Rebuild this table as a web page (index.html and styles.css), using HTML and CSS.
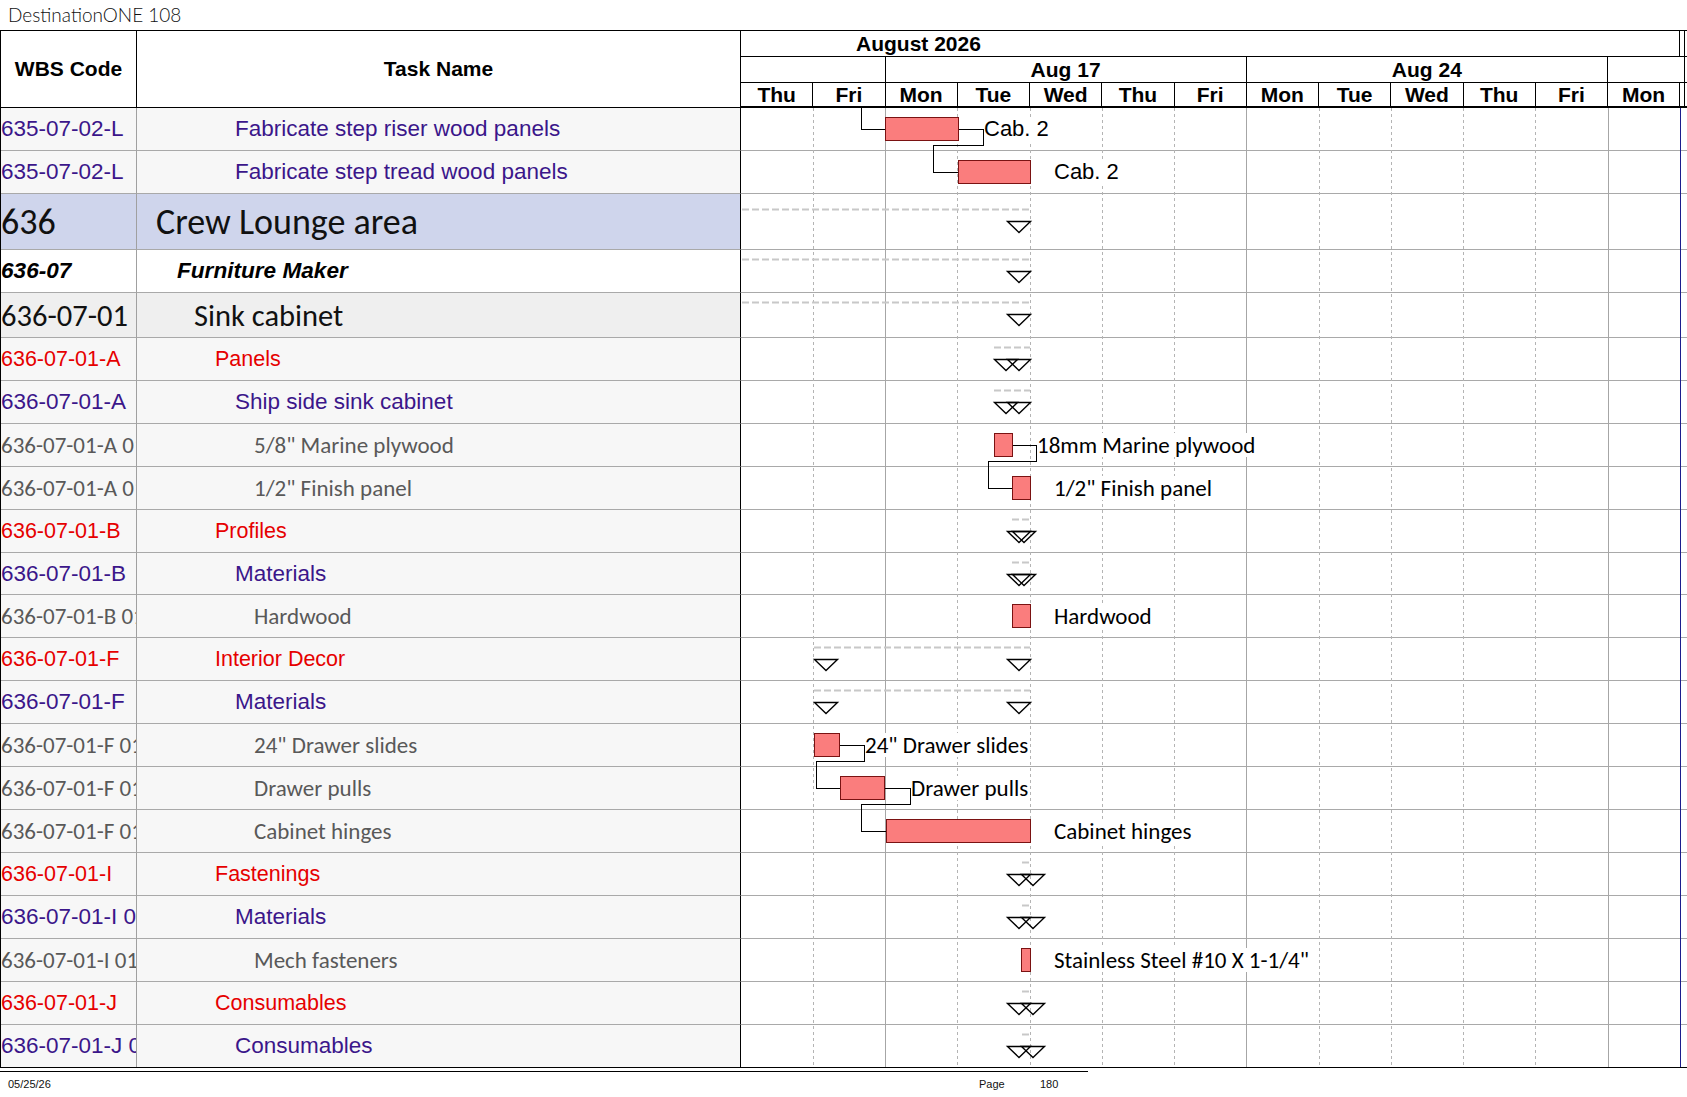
FILE: index.html
```html
<!DOCTYPE html>
<html lang="en">
<head>
<meta charset="utf-8">
<title>DestinationONE 108</title>
<link rel="stylesheet" href="styles.css">
</head>
<body>
<div class="title">DestinationONE 108</div>
<div class="sheet">
  <div class="head">
    <div class="h-wbs">WBS Code</div>
    <div class="h-task">Task Name</div>
    <div class="h-gantt">
      <div class="g-month"><div class="m-cell">August 2026</div><div class="m-end"></div></div>
      <div class="g-week"><div class="w-cell"></div><div class="w-cell">Aug 17</div><div class="w-cell">Aug 24</div><div class="w-cell"></div></div>
      <div class="g-day">
        <div class="d-cell">Thu</div><div class="d-cell">Fri</div><div class="d-cell">Mon</div><div class="d-cell">Tue</div><div class="d-cell">Wed</div><div class="d-cell">Thu</div><div class="d-cell">Fri</div><div class="d-cell">Mon</div><div class="d-cell">Tue</div><div class="d-cell">Wed</div><div class="d-cell">Thu</div><div class="d-cell">Fri</div><div class="d-cell">Mon</div><div class="d-end"></div>
      </div>
    </div>
  </div>
  <div class="body">
    <div class="row t-purple"><div class="c-wbs">635-07-02-L</div><div class="c-task">Fabricate step riser wood panels</div><div class="c-gantt"></div></div>
    <div class="row t-purple"><div class="c-wbs">635-07-02-L</div><div class="c-task">Fabricate step tread wood panels</div><div class="c-gantt"></div></div>
    <div class="row t-l1"><div class="c-wbs">636</div><div class="c-task">Crew Lounge area</div><div class="c-gantt"></div></div>
    <div class="row t-l2"><div class="c-wbs">636-07</div><div class="c-task">Furniture Maker</div><div class="c-gantt"></div></div>
    <div class="row t-l3"><div class="c-wbs">636-07-01</div><div class="c-task">Sink cabinet</div><div class="c-gantt"></div></div>
    <div class="row t-red"><div class="c-wbs">636-07-01-A</div><div class="c-task">Panels</div><div class="c-gantt"></div></div>
    <div class="row t-purple"><div class="c-wbs">636-07-01-A</div><div class="c-task">Ship side sink cabinet</div><div class="c-gantt"></div></div>
    <div class="row t-gray"><div class="c-wbs">636-07-01-A 01 01</div><div class="c-task">5/8&quot; Marine plywood</div><div class="c-gantt"></div></div>
    <div class="row t-gray"><div class="c-wbs">636-07-01-A 01 02</div><div class="c-task">1/2&quot; Finish panel</div><div class="c-gantt"></div></div>
    <div class="row t-red"><div class="c-wbs">636-07-01-B</div><div class="c-task">Profiles</div><div class="c-gantt"></div></div>
    <div class="row t-purple short"><div class="c-wbs">636-07-01-B</div><div class="c-task">Materials</div><div class="c-gantt"></div></div>
    <div class="row t-gray"><div class="c-wbs">636-07-01-B 01 01</div><div class="c-task">Hardwood</div><div class="c-gantt"></div></div>
    <div class="row t-red"><div class="c-wbs">636-07-01-F</div><div class="c-task">Interior Decor</div><div class="c-gantt"></div></div>
    <div class="row t-purple"><div class="c-wbs">636-07-01-F</div><div class="c-task">Materials</div><div class="c-gantt"></div></div>
    <div class="row t-gray"><div class="c-wbs">636-07-01-F 01 01</div><div class="c-task">24&quot; Drawer slides</div><div class="c-gantt"></div></div>
    <div class="row t-gray"><div class="c-wbs">636-07-01-F 01 02</div><div class="c-task">Drawer pulls</div><div class="c-gantt"></div></div>
    <div class="row t-gray"><div class="c-wbs">636-07-01-F 01 03</div><div class="c-task">Cabinet hinges</div><div class="c-gantt"></div></div>
    <div class="row t-red"><div class="c-wbs">636-07-01-I</div><div class="c-task">Fastenings</div><div class="c-gantt"></div></div>
    <div class="row t-purple"><div class="c-wbs">636-07-01-I 01</div><div class="c-task">Materials</div><div class="c-gantt"></div></div>
    <div class="row t-gray"><div class="c-wbs">636-07-01-I 01 01</div><div class="c-task">Mech fasteners</div><div class="c-gantt"></div></div>
    <div class="row t-red"><div class="c-wbs">636-07-01-J</div><div class="c-task">Consumables</div><div class="c-gantt"></div></div>
    <div class="row t-purple last"><div class="c-wbs">636-07-01-J 01</div><div class="c-task">Consumables</div><div class="c-gantt"></div></div>

    <svg class="chart" width="946" height="959" viewBox="0 0 946 959" xmlns="http://www.w3.org/2000/svg">
      <g class="grid">
        <line class="gl-d" x1="71.5" y1="0" x2="71.5" y2="959"/>
        <line class="gl-s" x1="143.5" y1="0" x2="143.5" y2="959"/>
        <line class="gl-d" x1="215.5" y1="0" x2="215.5" y2="959"/>
        <line class="gl-d" x1="288.5" y1="0" x2="288.5" y2="959"/>
        <line class="gl-d" x1="360.5" y1="0" x2="360.5" y2="959"/>
        <line class="gl-d" x1="432.5" y1="0" x2="432.5" y2="959"/>
        <line class="gl-s" x1="504.5" y1="0" x2="504.5" y2="959"/>
        <line class="gl-d" x1="577.5" y1="0" x2="577.5" y2="959"/>
        <line class="gl-d" x1="649.5" y1="0" x2="649.5" y2="959"/>
        <line class="gl-d" x1="721.5" y1="0" x2="721.5" y2="959"/>
        <line class="gl-d" x1="793.5" y1="0" x2="793.5" y2="959"/>
        <line class="gl-s" x1="866.5" y1="0" x2="866.5" y2="959"/>
        <line class="gl-edge" x1="938.5" y1="0" x2="938.5" y2="959"/>
      </g>
      <g class="summ">
        <line x1="0" y1="101.5" x2="288" y2="101.5"/>
        <line x1="0" y1="151.5" x2="288" y2="151.5"/>
        <line x1="0" y1="194.5" x2="288" y2="194.5"/>
        <line x1="252" y1="239.5" x2="288" y2="239.5"/>
        <line x1="252" y1="282.5" x2="288" y2="282.5"/>
        <line x1="270" y1="411.5" x2="288" y2="411.5"/>
        <line x1="270" y1="454.5" x2="288" y2="454.5"/>
        <line x1="72" y1="539.5" x2="288" y2="539.5"/>
        <line x1="72" y1="582.5" x2="288" y2="582.5"/>
        <line x1="280" y1="754.5" x2="288" y2="754.5"/>
        <line x1="280" y1="797.5" x2="288" y2="797.5"/>
        <line x1="280" y1="883.5" x2="288" y2="883.5"/>
        <line x1="280" y1="926.5" x2="288" y2="926.5"/>
      </g>
      <g class="tri">
        <polygon points="265.5,113.5 288.5,113.5 277,124.5"/>
        <polygon points="265.5,163.5 288.5,163.5 277,174.5"/>
        <polygon points="265.5,206.5 288.5,206.5 277,217.5"/>
        <polygon points="252.5,251.5 275.5,251.5 264,262.5"/>
        <polygon points="265.5,251.5 288.5,251.5 277,262.5"/>
        <polygon points="252.5,294.5 275.5,294.5 264,305.5"/>
        <polygon points="265.5,294.5 288.5,294.5 277,305.5"/>
        <polygon points="265.5,423.5 288.5,423.5 277,434.5"/>
        <polygon points="270.5,423.5 293.5,423.5 282,434.5"/>
        <polygon points="265.5,466.5 288.5,466.5 277,477.5"/>
        <polygon points="270.5,466.5 293.5,466.5 282,477.5"/>
        <polygon points="72.5,551.5 95.5,551.5 84,562.5"/>
        <polygon points="265.5,551.5 288.5,551.5 277,562.5"/>
        <polygon points="72.5,594.5 95.5,594.5 84,605.5"/>
        <polygon points="265.5,594.5 288.5,594.5 277,605.5"/>
        <polygon points="265.5,766.5 288.5,766.5 277,777.5"/>
        <polygon points="279.5,766.5 302.5,766.5 291,777.5"/>
        <polygon points="265.5,809.5 288.5,809.5 277,820.5"/>
        <polygon points="279.5,809.5 302.5,809.5 291,820.5"/>
        <polygon points="265.5,895.5 288.5,895.5 277,906.5"/>
        <polygon points="279.5,895.5 302.5,895.5 291,906.5"/>
        <polygon points="265.5,938.5 288.5,938.5 277,949.5"/>
        <polygon points="279.5,938.5 302.5,938.5 291,949.5"/>
      </g>
      <g class="link">
        <polyline points="119.5,0 119.5,21.5 143.5,21.5"/>
        <polyline points="216,21.5 241.5,21.5 241.5,37.5 191.5,37.5 191.5,64.5 216,64.5"/>
        <polyline points="270,337.5 294.5,337.5 294.5,353.5 246.5,353.5 246.5,380.5 270,380.5"/>
        <polyline points="97,637.5 122.5,637.5 122.5,653.5 74.5,653.5 74.5,680.5 98,680.5"/>
        <polyline points="142.5,680.5 168.5,680.5 168.5,696.5 119.5,696.5 119.5,723.5 144,723.5"/>
      </g>
      <g class="bar">
        <rect x="143.5" y="9.5" width="72.5" height="23"/>
        <rect x="216.5" y="52.5" width="72" height="23"/>
        <rect x="252.5" y="325.5" width="18" height="23"/>
        <rect x="270.5" y="368.5" width="18" height="23"/>
        <rect x="270.5" y="496.5" width="18" height="23"/>
        <rect x="72.5" y="625.5" width="25" height="23"/>
        <rect x="98.5" y="668.5" width="44" height="23"/>
        <rect x="144.5" y="711.5" width="144" height="23"/>
        <rect x="279.5" y="840.5" width="9" height="23"/>
      </g>
    </svg>

    <div class="lbl lbl-a" style="left:983px;top:9px">Cab. 2</div>
    <div class="lbl lbl-a" style="left:1053px;top:52px">Cab. 2</div>
    <div class="lbl lbl-c" style="left:1036px;top:325px">18mm Marine plywood</div>
    <div class="lbl lbl-c" style="left:1053px;top:368px">1/2&quot; Finish panel</div>
    <div class="lbl lbl-c" style="left:1053px;top:496px">Hardwood</div>
    <div class="lbl lbl-c" style="left:864px;top:625px">24&quot; Drawer slides</div>
    <div class="lbl lbl-c" style="left:910px;top:668px">Drawer pulls</div>
    <div class="lbl lbl-c" style="left:1053px;top:711px">Cabinet hinges</div>
    <div class="lbl lbl-c" style="left:1053px;top:840px">Stainless Steel #10 X 1-1/4&quot;</div>
  </div>
</div>
<div class="footer">
  <span class="f-date">05/25/26</span>
  <span class="f-page">Page</span>
  <span class="f-num">180</span>
</div>
</body>
</html>
```

FILE: styles.css
```css
* { box-sizing: border-box; }

html, body {
  margin: 0;
  padding: 0;
  background: #fff;
}

body {
  width: 1687px;
  height: 1097px;
  overflow: hidden;
  font-family: "Liberation Sans", Arial, sans-serif;
  color: #000;
}

.title {
  height: 30px;
  padding-left: 8px;
  font-family: "Lato", "Open Sans", sans-serif;
  font-weight: 300;
  font-size: 19px;
  line-height: 30px;
  color: #111;
}

.sheet {
  border-top: 1px solid #000;
  border-left: 1px solid #000;
  border-bottom: 1px solid #000;
}

/* ---------- header ---------- */
.head {
  display: grid;
  grid-template-columns: 136px 604px 1fr;
  height: 77px;
}

.h-wbs,
.h-task {
  display: flex;
  align-items: center;
  justify-content: center;
  border-right: 1px solid #000;
  border-bottom: 1px solid #000;
  font-weight: bold;
  font-size: 21px;
  padding-bottom: 1px;
}

.h-gantt {
  display: grid;
  grid-template-rows: 26px 26px 25px;
  font-weight: bold;
  font-size: 21px;
}

.g-month {
  display: grid;
  grid-template-columns: 939.25px 5px 1fr;
  border-bottom: 1px solid #000;
}

.m-cell {
  border-right: 1px solid #000;
  padding-left: 115px;
  line-height: 25px;
}

.m-end {
  border-right: 1px solid #000;
}

.g-week {
  display: grid;
  grid-template-columns: 144.5px 361.25px 361.25px 77.25px 1fr;
  border-bottom: 1px solid #000;
}

.w-cell {
  border-right: 1px solid #000;
  text-align: center;
  line-height: 25px;
}

.g-day {
  display: grid;
  grid-template-columns: repeat(13, 72.25px) 5px 1fr;
  border-bottom: 2px solid #000;
}

.d-cell,
.d-end {
  border-right: 1px solid #000;
  text-align: center;
  line-height: 23px;
}

/* ---------- body ---------- */
.body {
  position: relative;
}

.row {
  display: grid;
  grid-template-columns: 136px 604px 1fr;
  height: 43px;
}

.row.short { height: 42px; }
.row.last { height: 42px; }
.row.last > div { border-bottom: none; }

.c-wbs,
.c-task {
  display: flex;
  align-items: center;
  white-space: nowrap;
  overflow: hidden;
  background: #f7f7f7;
  border-bottom: 1px solid #a9a9a9;
}

.c-wbs {
  border-right: 1px solid #a0a0a0;
}

.c-task {
  border-right: 1px solid #000;
}

.c-gantt {
  background: #fff;
  border-bottom: 1px solid #a9a9a9;
}

/* row types */
.t-purple { color: #3b168a; font-size: 22.5px; }
.t-purple .c-task { padding-left: 98px; }

.t-red { color: #e60000; font-size: 21.5px; }
.t-red .c-task { padding-left: 78px; }

.t-gray {
  color: #595959;
  font-family: "Carlito", "Lato", sans-serif;
  font-size: 23px;
}
.t-gray .c-task { padding-left: 117px; }

.t-l1 {
  height: 56px;
  color: #111;
  font-family: "Carlito", "Lato", sans-serif;
  font-size: 36px;
}
.t-l1 .c-wbs,
.t-l1 .c-task { background: #cfd5ec; }
.t-l1 .c-task { padding-left: 19px; }

.t-l2 {
  font-weight: bold;
  font-style: italic;
  font-size: 22.6px;
  color: #000;
}
.t-l2 .c-wbs,
.t-l2 .c-task { background: #fff; }
.t-l2 .c-task { padding-left: 40px; }

.t-l3 {
  height: 45px;
  color: #111;
  font-family: "Carlito", "Lato", sans-serif;
  font-size: 30.5px;
}
.t-l3 .c-wbs,
.t-l3 .c-task { background: #efefef; }
.t-l3 .c-task { padding-left: 57px; }

/* ---------- chart overlay ---------- */
.chart {
  position: absolute;
  left: 741px;
  top: 0;
  overflow: visible;
}

.gl-d {
  stroke: #b4b4b4;
  stroke-width: 1;
  stroke-dasharray: 3 3;
  shape-rendering: crispEdges;
}

.gl-s {
  stroke: #a6a6a6;
  stroke-width: 1;
  shape-rendering: crispEdges;
}

.gl-edge {
  stroke: #1c1c8c;
  stroke-width: 1;
  shape-rendering: crispEdges;
}

.summ line {
  stroke: #c8c8c8;
  stroke-width: 2;
  stroke-dasharray: 7 3;
}

.tri polygon {
  fill: none;
  stroke: #000;
  stroke-width: 1.4;
  stroke-linejoin: miter;
}

.link polyline {
  fill: none;
  stroke: #000;
  stroke-width: 1;
  shape-rendering: crispEdges;
}

.bar rect {
  fill: #fa7d7d;
  stroke: #7a1212;
  stroke-width: 1;
  shape-rendering: crispEdges;
}

.lbl {
  position: absolute;
  background: #fff;
  line-height: 24px;
  height: 24px;
  white-space: nowrap;
  padding-right: 2px;
  color: #000;
}

.lbl-a {
  font-family: "Liberation Sans", Arial, sans-serif;
  font-size: 22px;
}

.lbl-c {
  font-family: "Carlito", "Lato", sans-serif;
  font-size: 23px;
}

/* ---------- footer ---------- */
.footer {
  margin-top: 3px;
  width: 1088px;
  border-top: 1px solid #000;
  display: flex;
  padding-top: 6px;
  font-size: 11px;
  line-height: 13px;
  color: #111;
}

.f-date {
  width: 979px;
  padding-left: 8px;
}

.f-page {
  width: 61px;
}
```
